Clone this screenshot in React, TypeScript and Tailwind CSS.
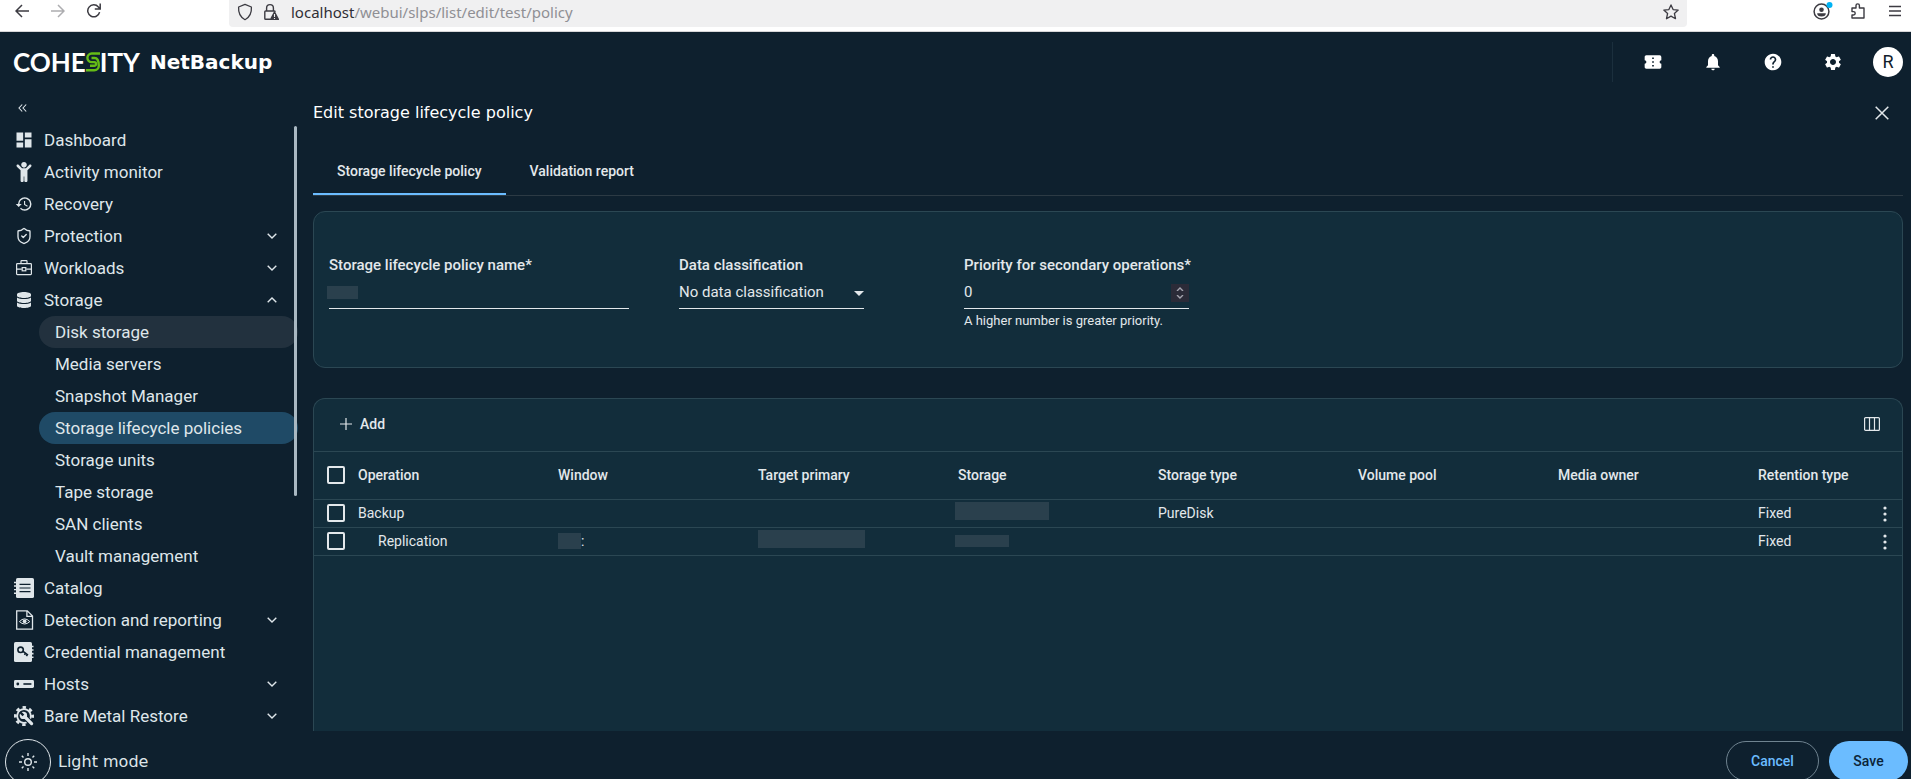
import type { ReactNode } from "react";
import { FaChild, FaDatabase } from "react-icons/fa";
import {
  MdConfirmationNumber,
  MdDashboard,
  MdHelp,
  MdHistory,
  MdNotifications,
  MdSettings,
} from "react-icons/md";
import { ShieldCheck } from "lucide-react";

const subItems = [
  { label: "Disk storage", state: "hover" },
  { label: "Media servers" },
  { label: "Snapshot Manager" },
  { label: "Storage lifecycle policies", state: "active" },
  { label: "Storage units" },
  { label: "Tape storage" },
  { label: "SAN clients" },
  { label: "Vault management" },
];

const columns = [
  "Operation",
  "Window",
  "Target primary",
  "Storage",
  "Storage type",
  "Volume pool",
  "Media owner",
  "Retention type",
];

function Chevron({ up = false }: { up?: boolean }) {
  return (
    <svg viewBox="0 0 10 6" className="h-1.5 w-2.5" fill="none" stroke="currentColor" strokeWidth="1.4">
      <path d={up ? "M.7 5.3 5 1l4.3 4.3" : "M.7.7 5 5 9.3.7"} />
    </svg>
  );
}

function BriefcaseIcon() {
  return (
    <svg viewBox="0 0 18 18" className="size-[18px]" fill="none" stroke="currentColor" strokeWidth="1.2">
      <rect x="1.6" y="4.6" width="14.8" height="11" rx=".8" />
      <path d="M6 4.6V2.2q0-.6.6-.6h4.8q.6 0 .6.6v2.4M1.6 10.2h5.2M11.2 10.2h5.2" />
      <rect x="7.2" y="8.6" width="3.6" height="3.2" />
    </svg>
  );
}

function CatalogIcon() {
  return (
    <svg viewBox="0 0 20 20" className="size-5">
      <rect x="2" y="0" width="18" height="20" rx="1.6" fill="currentColor" />
      <path d="M0 4.5h3M0 8h3M0 11.6h3M0 15.2h3" stroke="currentColor" strokeWidth="1.4" />
      <path d="M5.5 6.4h11M5.5 10h11M5.5 13.6h11" stroke="#0e202e" strokeWidth="1.2" />
    </svg>
  );
}

function DetectionIcon() {
  return (
    <svg viewBox="0 0 20 20" className="size-5" fill="none" stroke="currentColor" strokeWidth="1.3">
      <path d="M2.7.8h10.6l5.2 5.2v13.2H2.7zM12.9.8v5.6h5.6" />
      <path d="M5.4 11.6q5.2-5.4 10.4 0-5.2 4.8-10.4 0z" strokeWidth="1" />
      <circle cx="10.6" cy="11.3" r="1.9" fill="currentColor" stroke="none" />
    </svg>
  );
}

function CredentialIcon() {
  return (
    <svg viewBox="0 0 20 20" className="size-5">
      <rect x="0" y="0" width="18" height="20" rx="1.6" fill="currentColor" />
      <path d="M16.5 4.5h3M16.5 8h3M16.5 11.6h3M16.5 15.2h3" stroke="currentColor" strokeWidth="1.6" />
      <g fill="none" stroke="#0e202e" strokeWidth="1.6">
        <circle cx="6.6" cy="7.8" r="2.7" />
        <path d="m8.8 9.2 5.2 3.9M11.5 11.2l-1 1.6M13.4 12.6l-1 1.6" />
      </g>
    </svg>
  );
}

function HostIcon() {
  return (
    <svg viewBox="0 0 20 20" className="size-5">
      <rect x="0" y="6" width="20" height="8" rx="1.4" fill="currentColor" />
      <circle cx="3.8" cy="10" r="1.4" fill="#0e202e" />
      <path d="M9.4 10h8" stroke="#0e202e" strokeWidth="1.6" />
    </svg>
  );
}

function RestoreIcon() {
  return (
    <svg viewBox="0 0 20 20" className="size-5" fill="none">
      <circle cx="10" cy="10" r="8.6" stroke="currentColor" strokeWidth="2.8" strokeDasharray="3.4 3.354" strokeDashoffset="1.7" />
      <circle cx="10" cy="10" r="6.8" stroke="currentColor" strokeWidth="1.8" />
      <path d="m9.8 9.8 8 8" stroke="#0e202e" strokeWidth="5.4" />
      <path d="m10 10 7.6 7.6" stroke="currentColor" strokeWidth="3.2" strokeLinecap="round" />
      <circle cx="9.4" cy="9.4" r="3.7" fill="currentColor" />
      <path d="M9.4 9.4 6 6" stroke="#0e202e" strokeWidth="2.4" />
    </svg>
  );
}

function BrowserBar() {
  return (
    <div className="flex h-8 shrink-0 items-start overflow-hidden border-b border-[#d6d6d8] bg-white text-[#3c3b42]">
      <div className="flex h-6 w-[229px] shrink-0 items-center pb-0.5 pl-[15px]">
        <button aria-label="Back" className="w-9">
          <svg viewBox="0 0 14 14" className="size-3.5" fill="none" stroke="currentColor" strokeWidth="1.5">
            <path d="M14 7H1M7 1 1 7l6 6" />
          </svg>
        </button>
        <button aria-label="Forward" className="w-9 text-[#adadb0]">
          <svg viewBox="0 0 14 14" className="size-3.5" fill="none" stroke="currentColor" strokeWidth="1.5">
            <path d="M0 7h13M7 1l6 6-6 6" />
          </svg>
        </button>
        <button aria-label="Reload">
          <svg viewBox="0 0 14 16" className="h-4 w-3.5" fill="none" stroke="currentColor" strokeWidth="1.5">
            <path d="M12.6 9.2A6 6 0 1 1 11.4 4L13 5.8M13.2.6v5.4H7.8" />
          </svg>
        </button>
      </div>
      <div className="flex h-[27px] flex-1 items-center rounded-b bg-[#f0f0f1] pr-2 pb-1 pl-2">
        <svg viewBox="0 0 16 18" className="h-[18px] w-4 shrink-0" fill="none" stroke="currentColor" strokeWidth="1.3">
          <path d="M8 1.3 14.4 4q.6 9-6.4 12.7Q1 13 1.6 4z" strokeLinejoin="round" />
        </svg>
        <svg viewBox="0 0 16 18" className="mr-3 ml-2.5 h-[18px] w-4 shrink-0">
          <path d="M3.6 8V5a3.4 3.4 0 0 1 6.8 0v3M7 16.2H2.6q-.8 0-.8-.8V8.8q0-.8.8-.8h8.8q.8 0 .8.8" fill="none" stroke="currentColor" strokeWidth="1.4" />
          <path d="M11 8.4q.5-.8 1 0l4 7.6q.4 1-.6 1H7.6q-1 0-.6-1z" fill="currentColor" />
          <path d="M11.5 11v3M11.5 15v1" stroke="#f0f0f1" strokeWidth="1.1" />
        </svg>
        <span className="flex-1 font-['Noto_Sans'] text-[15px] leading-5 text-[#8f8f94]">
          <span className="text-[#2f2e35]">localhost</span>/webui/slps/list/edit/test/policy
        </span>
        <button aria-label="Bookmark">
          <svg viewBox="0 0 16 16" className="size-4" fill="none" stroke="currentColor" strokeWidth="1.3" strokeLinejoin="round">
            <path d="m8 .9 2.1 4.7 5.1.5-3.8 3.4 1.1 5.2L8 12.1l-4.5 2.6 1.1-5.2L.8 6.1l5.1-.5z" />
          </svg>
        </button>
      </div>
      <div className="flex h-6 w-56 shrink-0 items-center justify-end gap-[18px] pr-2.5 pb-0.5">
        <button aria-label="Account">
          <svg viewBox="0 0 20 18" className="h-[18px] w-5">
            <circle cx="8.5" cy="9.5" r="7.4" fill="none" stroke="currentColor" strokeWidth="1.5" />
            <circle cx="8.5" cy="7.8" r="2.3" fill="currentColor" />
            <path d="M4.2 11.2h8.6q0 3.3-4.3 3.3t-4.3-3.3z" fill="currentColor" />
            <circle cx="16.5" cy="3" r="3" fill="#00b3f4" />
          </svg>
        </button>
        <button aria-label="Extensions">
          <svg viewBox="0 0 14 16" className="h-4 w-3.5" fill="none" stroke="currentColor" strokeWidth="1.4" strokeLinejoin="round">
            <path d="M1 5h4V2.6a1.7 1.7 0 0 1 3.4 0V5H13v10H1v-3h1.5a1.7 1.7 0 0 0 0-3.4H1z" />
          </svg>
        </button>
        <button aria-label="Menu" className="ml-1.5">
          <svg viewBox="0 0 12 12" className="size-3" stroke="currentColor" strokeWidth="1.3">
            <path d="M0 1.5h12M0 6h12M0 10.5h12" />
          </svg>
        </button>
      </div>
    </div>
  );
}

function Header() {
  return (
    <header className="flex h-[60px] shrink-0 items-center text-white">
      <a href="#home" className="flex flex-1 items-center pl-[13px]">
        <span className="flex items-center font-['Lato'] text-[26px] leading-8 font-bold">
          COHE
          <svg viewBox="0 0 14 20" className="h-5 w-3.5" fill="none" stroke="#65bc16" strokeWidth="2.4">
            <path d="M14 1.500H5.700a4.300 4.300 0 0 0 0 8.600H8.300a1.800 1.800 0 0 1 0 3.600H4" />
            <path d="M0 18.300h8.300a4.500 4.500 0 0 0 4.500-4.500C12.800 9 11.500 6 8.500 6H5.500" />
          </svg>
          ITY
        </span>
        <span className="ml-2.5 font-['DejaVu_Sans'] text-xl font-bold">NetBackup</span>
      </a>
      <div className="h-10 border-l border-[#1b2f3d]" />
      <div className="flex items-center pl-2.5">
        {[
          { label: "Tickets", Icon: MdConfirmationNumber },
          { label: "Notifications", Icon: MdNotifications },
          { label: "Help", Icon: MdHelp },
          { label: "Settings", Icon: MdSettings },
        ].map(({ label, Icon }) => (
          <button key={label} aria-label={label} className="flex w-[60px] justify-center">
            <Icon className="size-5" />
          </button>
        ))}
      </div>
      <button className="mr-2 ml-2.5 size-[30px] rounded-full bg-white font-['Roboto'] text-lg leading-6 text-[#10202c]">
        R
      </button>
    </header>
  );
}

function NavItem({ icon, label, chevron }: { icon: ReactNode; label: string; chevron?: "up" | "down" }) {
  return (
    <a href="#nav" className="flex h-8 items-center pr-[21px] pl-3.5">
      <span className="flex w-5 justify-center">{icon}</span>
      <span className="ml-2.5 flex-1">{label}</span>
      {chevron && <Chevron up={chevron === "up"} />}
    </a>
  );
}

function Sidebar() {
  return (
    <aside className="flex w-[298px] shrink-0 flex-col text-[17px] leading-6 text-[#dfe6ea]">
      <button aria-label="Collapse menu" className="flex h-8 shrink-0 items-center pl-[18px]">
        <svg viewBox="0 0 9 8" className="h-2 w-[9px]" fill="none" stroke="currentColor" strokeWidth="1.1">
          <path d="M4.2.5 1 4l3.2 3.5M8.2.5 5 4l3.2 3.5" />
        </svg>
      </button>
      <div className="relative min-h-0 flex-1 overflow-hidden">
        <nav>
          <NavItem icon={<MdDashboard className="size-5" />} label="Dashboard" />
          <NavItem icon={<FaChild className="size-5" />} label="Activity monitor" />
          <NavItem icon={<MdHistory className="size-[18px]" />} label="Recovery" />
          <NavItem icon={<ShieldCheck className="size-[18px]" strokeWidth={1.8} />} label="Protection" chevron="down" />
          <NavItem icon={<BriefcaseIcon />} label="Workloads" chevron="down" />
          <NavItem icon={<FaDatabase className="size-4" />} label="Storage" chevron="up" />
          {subItems.map((item) => (
            <a
              key={item.label}
              href="#storage"
              className={`ml-[39px] flex h-8 items-center rounded-full pl-4 ${
                item.state === "active" ? "bg-[#1f4a66]" : item.state === "hover" ? "bg-[#22313e]" : ""
              }`}
            >
              {item.label}
            </a>
          ))}
          <NavItem icon={<CatalogIcon />} label="Catalog" />
          <NavItem icon={<DetectionIcon />} label="Detection and reporting" chevron="down" />
          <NavItem icon={<CredentialIcon />} label="Credential management" />
          <NavItem icon={<HostIcon />} label="Hosts" chevron="down" />
          <NavItem icon={<RestoreIcon />} label="Bare Metal Restore" chevron="down" />
        </nav>
        {/* scroll thumb */}
        <div className="absolute top-0.5 right-px h-[61%] w-[3px] rounded-full bg-[#a9b8c2]" />
      </div>
      <button className="flex h-12 shrink-0 items-start gap-[7px] overflow-hidden pt-2 pl-[5px]">
        <span className="flex size-[46px] shrink-0 items-center justify-center rounded-full border border-[#dfe6ea]">
          <svg viewBox="0 0 18 18" className="size-[18px]" fill="none" stroke="currentColor" strokeWidth="1.4">
            <circle cx="9" cy="9" r="3.3" />
            <path d="M9 0v3M9 15v3M0 9h3M15 9h3M2.8 2.8l1.7 1.7M13.5 13.5l1.7 1.7M2.8 15.2l1.7-1.7M13.5 4.5l1.7-1.7" />
          </svg>
        </span>
        <span className="pt-[11px] font-['DejaVu_Sans'] text-base leading-6">Light mode</span>
      </button>
    </aside>
  );
}

function PolicyForm() {
  return (
    <form className="flex h-[157px] shrink-0 items-start rounded-xl border border-[#2b4753] bg-[#122d3b] px-[15px] pt-[41px]">
      <div className="mr-[50px] w-[300px]">
        <label htmlFor="policy-name" className="block text-[15px] leading-6 font-medium">
          Storage lifecycle policy name*
        </label>
        <div className="flex h-8 items-center border-b border-[#e3e8eb]">
          <span className="-ml-0.5 h-[13px] w-[31px] shrink-0 bg-[#2a404d]" />
          <input id="policy-name" className="w-full bg-transparent outline-none" />
        </div>
      </div>
      <div className="mr-[100px] w-[185px]">
        <label htmlFor="classification" className="block text-[15px] leading-6 font-medium">
          Data classification
        </label>
        <div className="relative border-b border-[#e3e8eb]">
          <select id="classification" className="block h-[31px] w-full appearance-none bg-transparent text-[15px] outline-none">
            <option>No data classification</option>
          </select>
          <svg viewBox="0 0 10 5" className="pointer-events-none absolute top-[14px] right-0 h-[5px] w-2.5" fill="currentColor">
            <path d="M0 0h10L5 5z" />
          </svg>
        </div>
      </div>
      <div className="w-[225px]">
        <label htmlFor="priority" className="block text-[15px] leading-6 font-medium whitespace-nowrap">
          Priority for secondary operations*
        </label>
        <div className="flex h-8 items-center border-b border-[#e3e8eb]">
          <input
            id="priority"
            type="number"
            defaultValue={0}
            className="min-w-0 flex-1 appearance-none bg-transparent text-[15px] outline-none [&::-webkit-inner-spin-button]:appearance-none"
          />
          <span className="flex h-[18px] w-[18px] flex-col items-center justify-center gap-1 bg-[#2b2b38] text-[#a4a4ae]">
            <svg viewBox="0 0 8 4" className="h-1 w-2" fill="none" stroke="currentColor" strokeWidth="1.4">
              <path d="m1 4 3-3 3 3" />
            </svg>
            <svg viewBox="0 0 8 4" className="h-1 w-2" fill="none" stroke="currentColor" strokeWidth="1.4">
              <path d="m1 0 3 3 3-3" />
            </svg>
          </span>
        </div>
        <p className="pt-1 text-[13px] leading-4">A higher number is greater priority.</p>
      </div>
    </form>
  );
}

const checkbox =
  "block size-[18px] appearance-none rounded-xs border-2 border-[#e3e8eb] bg-transparent checked:bg-[#6bbcff]";

function RowMenu() {
  return (
    <button aria-label="Row actions" className="flex h-6 w-4 items-center justify-center pt-0.5">
      <svg viewBox="0 0 4 16" className="h-4 w-1" fill="currentColor">
        <circle cx="2" cy="2" r="1.6" />
        <circle cx="2" cy="8" r="1.6" />
        <circle cx="2" cy="14" r="1.6" />
      </svg>
    </button>
  );
}

function Operations() {
  return (
    <section className="mt-[30px] min-h-0 flex-1 overflow-hidden rounded-t-xl border border-b-0 border-[#2b4753] bg-[#122d3b]">
      <div className="flex h-[53px] items-center justify-between border-b border-[#2b4753] pr-[22px] pb-0.5 pl-[26px]">
        <button className="flex items-center gap-2 font-medium">
          <svg viewBox="0 0 12 12" className="size-3" stroke="currentColor" strokeWidth="1.2">
            <path d="M0 6h12M6 0v12" />
          </svg>
          Add
        </button>
        <button aria-label="Columns">
          <svg viewBox="0 0 16 14" className="h-3.5 w-4" fill="none" stroke="currentColor" strokeWidth="1.2">
            <rect x=".6" y=".6" width="14.8" height="12.8" rx="1" />
            <path d="M5.5.6v12.8M10.5.6v12.8" />
          </svg>
        </button>
      </div>
      <table className="w-full table-fixed text-left">
        <colgroup>
          <col className="w-11" />
          {columns.slice(0, 7).map((c) => (
            <col key={c} className="w-[200px]" />
          ))}
          <col />
          <col className="w-[25px]" />
        </colgroup>
        <thead>
          <tr className="h-[47px] border-b border-[#2b4753]">
            <th className="pl-[13px]">
              <input type="checkbox" aria-label="Select all" className={checkbox} />
            </th>
            {columns.map((c) => (
              <th key={c} className="font-medium">
                {c}
              </th>
            ))}
            <td />
          </tr>
        </thead>
        <tbody>
          <tr className="h-7 border-b border-[#2b4753]">
            <td className="pl-[13px]">
              <input type="checkbox" aria-label="Select Backup" className={checkbox} />
            </td>
            <td>Backup</td>
            <td />
            <td />
            <td>
              <div className="-ml-[3px] mb-1 h-[18px] w-[94px] bg-[#2a404d]" />
            </td>
            <td>PureDisk</td>
            <td />
            <td />
            <td>Fixed</td>
            <td>
              <RowMenu />
            </td>
          </tr>
          <tr className="h-7 border-b border-[#2b4753]">
            <td className="pl-[13px]">
              <input type="checkbox" aria-label="Select Replication" className={checkbox} />
            </td>
            <td className="pl-5">Replication</td>
            <td>
              <div className="flex items-center">
                <span className="h-4 w-[23px] bg-[#2a404d]" />:
              </div>
            </td>
            <td>
              <div className="mb-1 h-[18px] w-[107px] bg-[#2a404d]" />
            </td>
            <td>
              <div className="-ml-[3px] h-3 w-[54px] bg-[#2a404d]" />
            </td>
            <td />
            <td />
            <td />
            <td>Fixed</td>
            <td>
              <RowMenu />
            </td>
          </tr>
        </tbody>
      </table>
    </section>
  );
}

export default function App() {
  return (
    <div className="flex h-screen flex-col overflow-hidden bg-[#0e202e] font-['Roboto'] text-sm text-[#e3e8eb]">
      <BrowserBar />
      <Header />
      <div className="flex min-h-0 flex-1">
        <Sidebar />
        <main className="flex min-w-0 flex-1 flex-col pl-[15px]">
          <div className="flex min-h-0 flex-1 flex-col pr-2">
            <div className="flex h-[42px] shrink-0 items-center justify-between pr-3.5">
              <h1 className="font-['DejaVu_Sans'] text-base text-white">Edit storage lifecycle policy</h1>
              <button aria-label="Close">
                <svg viewBox="0 0 14 14" className="size-3.5" fill="none" stroke="currentColor" strokeWidth="1.5">
                  <path d="m.7.7 12.6 12.6M13.3.7.7 13.3" />
                </svg>
              </button>
            </div>
            <div role="tablist" className="mt-3.5 mb-[15px] flex h-12 shrink-0 border-b border-[#2c3a44]">
              <button role="tab" aria-selected="true" className="border-b-2 border-[#6bbcff] px-6 font-medium">
                Storage lifecycle policy
              </button>
              <button role="tab" aria-selected="false" className="border-b-2 border-transparent px-6 font-medium">
                Validation report
              </button>
            </div>
            <PolicyForm />
            <Operations />
          </div>
          <footer className="flex h-12 shrink-0 items-start justify-end gap-2.5 overflow-hidden pt-2.5 pr-[3px] font-medium">
            <button className="h-10 min-w-[93px] shrink-0 rounded-full border border-[#6f8390] px-6 text-[#6bbcff]">
              Cancel
            </button>
            <button className="h-10 min-w-[79px] shrink-0 rounded-full bg-[#6bbcff] px-6 text-[#0b2438]">Save</button>
          </footer>
        </main>
      </div>
    </div>
  );
}
